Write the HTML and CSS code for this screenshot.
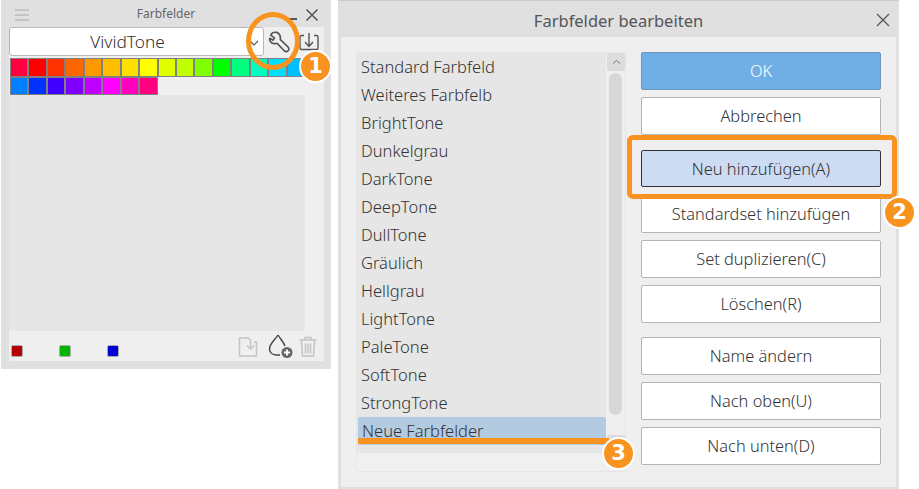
FILE: index.html
```html
<!DOCTYPE html>
<html lang="de">
<head>
    <meta charset="UTF-8">
    <title>Farbfelder</title>
    <link rel="stylesheet" href="styles.css">
</head>
<body>
    <!-- Farbfelder palette -->
    <section class="palette">
        <header class="palette-title">
            <svg class="menu-icon" width="14" height="12" viewBox="0 0 14 12"><path d="M0 1h14M0 6h14M0 11h14" stroke="#bbb" stroke-width="1.4" fill="none"/></svg>
            <span>Farbfelder</span>
            <div class="min-icon"></div>
            <svg class="close-icon" width="14" height="14" viewBox="0 0 14 14"><path d="M1.500 1.500l11 11M12.500 1.500l-11 11" stroke="#555" stroke-width="1.500" fill="none"/></svg>
        </header>
        <div class="palette-body">
            <div class="set-row">
                <div class="set-select">
                    <span>VividTone</span>
                    <svg class="chevron" width="10" height="7" viewBox="0 0 10 7"><path d="M1 1l4 4 4-4" stroke="#555" stroke-width="1.200" fill="none"/></svg>
                </div>
                <svg class="wrench" width="22" height="22" viewBox="0 0 24 24"><path d="M9.500 1.500C6.800 1 4 2 3 4.500L7 7.500 5.500 10 1.800 8C1.500 11 3.500 13.500 7 13.800C8.500 13.900 9.300 13.500 10 13.500L18 21.800C19.500 23 22.500 22.500 22.800 19.500C22.800 18.500 22.300 17.800 21.500 17L13.500 9.500C13.800 6 12.500 2.500 9.500 1.500Z" fill="none" stroke="#555" stroke-width="1.800" stroke-linejoin="round"/></svg>
                <svg class="import" width="20" height="18" viewBox="0 0 20 18"><path d="M5 2.500H2.500Q1 2.500 1 4V15Q1 16.500 2.500 16.500H17.500Q19 16.500 19 15V4Q19 2.500 17.500 2.500H15M10 0V13M6 9l4 4.500 4-4.500" fill="none" stroke="#555" stroke-width="1.400"/></svg>
            </div>
            <div class="swatches">
                <i style="background:#ff0040"></i><i style="background:#ff0000"></i><i style="background:#ff3300"></i><i style="background:#ff6600"></i>
                <i style="background:#ff9900"></i><i style="background:#ffbf00"></i><i style="background:#ffdf00"></i><i style="background:#ffff00"></i>
                <i style="background:#dfff00"></i><i style="background:#bfff00"></i><i style="background:#80ff00"></i><i style="background:#00ff00"></i>
                <i style="background:#00ff80"></i><i style="background:#00ffbf"></i><i style="background:#00dfff"></i><i style="background:#00bfff"></i>
                <i style="background:#0080ff"></i><i style="background:#0033ff"></i><i style="background:#4000ff"></i><i style="background:#8000ff"></i>
                <i style="background:#bf00ff"></i><i style="background:#ff00ff"></i><i style="background:#ff00bf"></i><i style="background:#ff0080"></i>
            </div>
            <div class="swatch-empty"></div>
            <footer class="palette-foot">
                <div class="rgb">
                    <b class="chip chip-red"></b>
                    <b class="chip chip-green"></b>
                    <b class="chip chip-blue"></b>
                </div>
                <div class="foot-tools">
                    <svg width="20" height="21" viewBox="0 0 20 21"><path d="M1.500 17V2H9Q12.500 2 12.500 5.500V13M9 9.500l3.500 3.500L16 9.500M16 6H18.500V20H1.500V17" fill="none" stroke="#c4c4c4" stroke-width="1.500" stroke-linejoin="round"/></svg>
                    <svg class="tool-drop" width="25" height="24" viewBox="0 0 25 24"><path d="M10 1C7 6 1.500 9.500 1.500 15C1.500 19 5 21 9 21H12M10 1C12.500 5 15.500 8 17 12" fill="none" stroke="#444" stroke-width="1.400"/><circle cx="19" cy="18.500" r="5.500" fill="#666"/><path d="M16 18.500h6M19 15.500v6" stroke="#fff" stroke-width="1.800"/></svg>
                    <svg width="18" height="21" viewBox="0 0 18 21"><path d="M.5 4H17.500M6 4V1.500H12V4M2.500 4.500L3.500 20H14.500L15.500 4.500M6.500 7.500V17.500M9 7.500V17.500M11.500 7.500V17.500" fill="none" stroke="#c4c4c4" stroke-width="1.500"/></svg>
                </div>
            </footer>
        </div>
        <div class="tool-ring"></div>
        <span class="badge badge-one">1</span>
    </section>

    <!-- Dialog: Farbfelder bearbeiten -->
    <section class="dialog">
        <header class="dialog-title">
            <span>Farbfelder bearbeiten</span>
            <svg class="dialog-close" width="14" height="14" viewBox="0 0 14 14"><path d="M1 1l12 12M13 1L1 13" stroke="#555" stroke-width="1.300" fill="none"/></svg>
        </header>
        <div class="dialog-body">
            <div class="set-list">
                <div class="set-scroller">
                    <ul class="set-items">
                        <li>Standard Farbfeld</li>
                        <li>Weiteres Farbfelb</li>
                        <li>BrightTone</li>
                        <li>Dunkelgrau</li>
                        <li>DarkTone</li>
                        <li>DeepTone</li>
                        <li>DullTone</li>
                        <li>Gräulich</li>
                        <li>Hellgrau</li>
                        <li>LightTone</li>
                        <li>PaleTone</li>
                        <li>SoftTone</li>
                        <li>StrongTone</li>
                        <li class="selected">Neue Farbfelder</li>
                        <li>VividTone</li>
                    </ul>
                    <div class="scrollbar">
                        <div class="scroll-btn"><svg width="9" height="6" viewBox="0 0 9 6"><path d="M1 4.500l3.500-3 3.500 3" stroke="#777" fill="none"/></svg></div>
                        <div class="scroll-thumb"></div>
                        <div class="scroll-btn scroll-btn-end"></div>
                    </div>
                </div>
                <div class="list-foot"></div>
                <div class="select-line"></div>
            </div>
            <div class="actions">
                <button class="btn btn-ok">OK</button>
                <button class="btn">Abbrechen</button>
                <button class="btn btn-active">Neu hinzufügen(A)</button>
                <button class="btn">Standardset hinzufügen</button>
                <button class="btn">Set duplizieren(C)</button>
                <button class="btn">Löschen(R)</button>
                <button class="btn btn-group">Name ändern</button>
                <button class="btn">Nach oben(U)</button>
                <button class="btn">Nach unten(D)</button>
            </div>
        </div>
        <div class="action-ring"></div>
        <span class="badge badge-two">2</span>
        <span class="badge badge-three">3</span>
    </section>
</body>
</html>
```

FILE: styles.css
```css
body {
    margin: 0;
    width: 919px;
    height: 489px;
    overflow: hidden;
    background: #fff;
    display: flex;
    align-items: flex-start;
    gap: 7px;
    padding-left: 1px;
    box-sizing: border-box;
    font-family: "Noto Sans", "Noto Sans CJK JP", sans-serif;
    font-weight: 300;
    color: #333;
}

/* palette */
.palette {
    position: relative;
    width: 330px;
    height: 369px;
    background: #e0e0e0;
    padding: 0 7px 8px 8px;
    box-sizing: border-box;
    display: flex;
    flex-direction: column;
}
.palette-title {
    height: 27px;
    flex: none;
    display: flex;
    align-items: center;
    justify-content: center;
    font-size: 12px;
    font-weight: 400;
    color: #666;
    position: relative;
    padding-right: 1px;
}
.menu-icon {
    position: absolute;
    left: 6px;
    top: 9px;
}
.min-icon {
    position: absolute;
    left: 276px;
    top: 18px;
    width: 12px;
    height: 1.500px;
    background: #555;
}
.close-icon {
    position: absolute;
    right: 5px;
    top: 8px;
}
.palette-body {
    flex: 1;
    background: #efefef;
    display: flex;
    flex-direction: column;
    min-height: 0;
}
.set-row {
    height: 29px;
    flex: none;
    display: flex;
    align-items: center;
}
.set-select {
    width: 255px;
    height: 29px;
    box-sizing: border-box;
    background: #fff;
    border: 1px solid #b8b8b8;
    border-radius: 3px;
    display: flex;
    align-items: center;
    justify-content: center;
    font-size: 17.300px;
    position: relative;
    padding-right: 18px;
}
.chevron {
    position: absolute;
    right: 4px;
    top: 12px;
}
.wrench {
    margin-left: 4px;
}
.import {
    margin-left: 9px;
}
.swatches {
    display: flex;
    flex-wrap: wrap;
    align-content: flex-start;
    width: 296px;
    margin: 2px 0 0 1px;
    height: 37px;
    flex: none;
}
.swatches i {
    width: 18.450px;
    height: 18.500px;
    box-sizing: border-box;
    border: 1px solid #808080;
}
.swatch-empty {
    width: 296px;
    flex: 1;
    background: #e6e6e6;
}
.palette-foot {
    height: 30px;
    flex: none;
    display: flex;
    align-items: center;
    justify-content: space-between;
    padding: 0 7px 0 2px;
}
.rgb {
    display: flex;
    gap: 36px;
    margin-top: 10px;
}
.chip {
    width: 12px;
    height: 12px;
    box-sizing: border-box;
    border: 1px solid #aaa;
    border-radius: 2px;
    display: block;
}
.chip-red { background: #b40000; }
.chip-green { background: #00b400; }
.chip-blue { background: #0000d2; }
.foot-tools {
    display: flex;
    align-items: center;
}
.tool-drop {
    margin: 0 6px 0 10px;
}

/* annotations */
.tool-ring {
    position: absolute;
    left: 245px;
    top: 12px;
    width: 54px;
    height: 58px;
    box-sizing: border-box;
    border: 5px solid #f7931e;
    border-radius: 50%;
}
.action-ring {
    position: absolute;
    left: 289px;
    top: 134px;
    width: 270px;
    height: 64px;
    box-sizing: border-box;
    border: 5px solid #f7931e;
    border-radius: 6px;
}
.badge {
    position: absolute;
    width: 29px;
    height: 29px;
    border: 2px solid #fff;
    border-radius: 50%;
    background: #f7931e;
    color: #fff;
    font-family: "DejaVu Sans", sans-serif;
    font-weight: bold;
    font-size: 21px;
    line-height: 29px;
    text-align: center;
}
.badge-one { left: 298px; top: 50px; }
.badge-two { left: 545px; top: 195px; }
.badge-three { left: 264px; top: 436px; }

/* dialog */
.dialog {
    position: relative;
    width: 561px;
    height: 489px;
    background: #e0e0e0;
    border-top: 1px solid #ccc;
    padding: 0 3px 2px;
    box-sizing: border-box;
    display: flex;
    flex-direction: column;
}
.dialog-title {
    height: 36px;
    flex: none;
    box-sizing: border-box;
    padding-top: 2px;
    display: flex;
    align-items: center;
    justify-content: center;
    font-size: 16.500px;
    font-weight: 400;
    color: #555;
    position: relative;
}
.dialog-close {
    position: absolute;
    right: 6px;
    top: 12px;
}
.dialog-body {
    flex: 1;
    background: #efefef;
    display: flex;
    padding: 15px 15px 0;
    gap: 15px;
    min-height: 0;
}
.set-list {
    position: relative;
    width: 270px;
    height: 420px;
    flex: none;
    display: flex;
    flex-direction: column;
    border: 1px solid #e6e6e6;
    box-sizing: border-box;
}
.set-scroller {
    height: 400px;
    flex: none;
    display: flex;
    overflow: hidden;
}
.set-items {
    list-style: none;
    margin: 0;
    padding: 0;
    width: 249px;
    background: #e6e6e6;
    overflow: hidden;
}
.set-items li {
    height: 28px;
    line-height: 28px;
    padding-left: 4px;
    font-size: 16.500px;
}
.set-items .selected {
    background: #b3cbe1;
    margin-left: 1px;
    border-radius: 2px;
}
.scrollbar {
    flex: 1;
    padding-left: 1px;
    display: flex;
    flex-direction: column;
    gap: 2px;
}
.scroll-btn {
    height: 18px;
    flex: none;
    background: #dcdcdc;
    border-radius: 2px;
    display: flex;
    align-items: center;
    justify-content: center;
}
.scroll-btn-end {
    margin-top: auto;
}
.scroll-thumb {
    width: 13px;
    height: 342px;
    flex: none;
    margin-left: 2px;
    background: #d7d7d7;
    border-radius: 7px;
}
.list-foot {
    flex: 1;
    background: #f0f0f0;
}
.select-line {
    position: absolute;
    left: 1px;
    top: 385px;
    width: 251px;
    height: 6px;
    background: #f7931e;
}
.actions {
    width: 240px;
    display: flex;
    flex-direction: column;
    gap: 7px;
}
.btn {
    height: 38px;
    flex: none;
    margin: 0;
    padding: 0 0 1px;
    background: #fff;
    border: 1px solid #b4b4b4;
    border-radius: 2px;
    font: 300 16.400px "Noto Sans", "Noto Sans CJK JP", sans-serif;
    color: #333;
}
.btn-ok {
    background: #70afe6;
    border-color: #6f97bb;
    color: #fff;
}
.btn-active {
    height: 37px;
    background: #cddcf2;
    border-color: #333;
    margin: 8px 0 1px;
}
.btn-group {
    margin-top: 7px;
}
```
